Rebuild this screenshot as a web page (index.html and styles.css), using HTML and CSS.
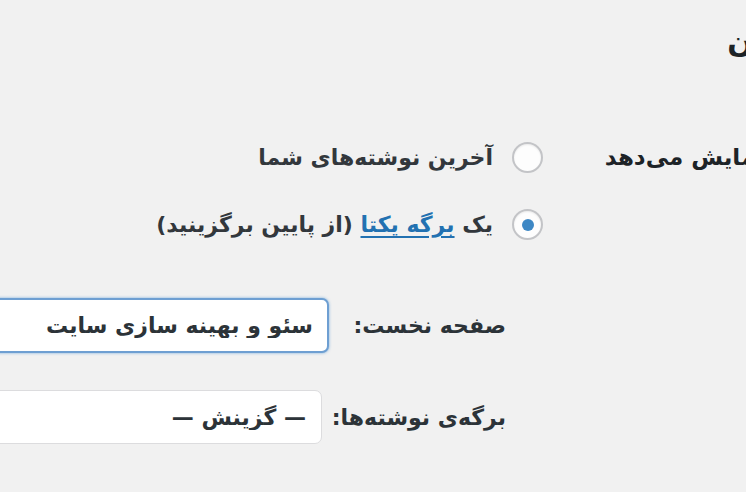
FILE: index.html
```html
<!DOCTYPE html>
<html lang="fa" dir="ltr">
<head>
<meta charset="utf-8">
<title>تنظیمات خواندن</title>
<link rel="stylesheet" href="styles.css">
</head>
<body>
<div class="wrap">
  <h1 class="title">تنظیمات خواندن</h1>
  <div class="form-row">
    <div class="th">صفحه نخست شما نمایش می‌دهد</div>
    <div class="td">
      <label class="radio-row"><span class="radio"></span><span>آخرین نوشته‌های شما</span></label>
      <label class="radio-row"><span class="radio checked"></span><span>یک <a href="#" class="link">برگه یکتا</a> (از پایین برگزینید)</span></label>
      <ul class="pages">
        <li class="field"><label class="lbl lbl-front">صفحه نخست:</label><input class="box box-focus" type="text" value="سئو و بهینه سازی سایت"></li>
        <li class="field field-second"><label class="lbl lbl-posts">برگه‌ی نوشته‌ها:</label><select class="box box-select"><option>— گزینش —</option></select></li>
      </ul>
    </div>
  </div>
</div>
</body>
</html>
```
FILE: styles.css
```css
html, body {
  margin: 0;
  padding: 0;
}
body {
  background: #f1f1f1;
  overflow: hidden;
  width: 746px;
  height: 492px;
  font-family: "DejaVu Sans", "Noto Sans", sans-serif;
  color: #2c3338;
}
.wrap {
  direction: rtl;
  width: 1100px;
  box-sizing: border-box;
  padding: 21px 134px 0 0;
}
.title {
  margin: 0 -3px 0 0;
  font-size: 30px;
  line-height: 42px;
  font-weight: bold;
  color: #1d2327;
}
.form-row {
  display: flex;
  margin-top: 61px;
}
.th {
  width: 435px;
  margin-right: -12px;
  flex: none;
  box-sizing: border-box;
  font-size: 23px;
  font-weight: bold;
  line-height: 67px;
  color: #1d2327;
  white-space: nowrap;
}
.td {
  flex: 1;
  font-size: 22px;
  font-weight: bold;
  color: #32373c;
}
.radio-row {
  display: flex;
  align-items: center;
  gap: 19px;
  height: 67px;
  white-space: nowrap;
}
.radio {
  width: 31px;
  height: 31px;
  box-sizing: border-box;
  border: 2px solid #c3c4c7;
  border-radius: 50%;
  background: #fdfdfd;
  box-shadow: inset 0 1px 2px rgba(0,0,0,0.08);
  display: flex;
  align-items: center;
  justify-content: center;
  flex: none;
}
.radio.checked::after {
  content: "";
  width: 12px;
  height: 12px;
  border-radius: 50%;
  background: #3d87c4;
}
.link {
  color: #2271b1;
  text-decoration: underline;
  text-underline-offset: 4px;
}
.pages {
  list-style: none;
  margin: 40px 37px 0 0;
  padding: 0;
}
.field {
  display: flex;
  align-items: center;
  gap: 14px;
}
.field-second {
  margin-top: 37px;
}
.lbl {
  flex: none;
  white-space: nowrap;
  color: #2c3338;
}
.lbl-front { width: 163px; }
.lbl-posts { width: 170px; }
.box {
  flex: none;
  width: 420px;
  box-sizing: border-box;
  font: bold 22px "DejaVu Sans", sans-serif;
  color: #2c3338;
  background: #fff;
  direction: rtl;
  -webkit-appearance: none;
  appearance: none;
  outline: none;
  margin: 0;
}
.box-focus {
  height: 55px;
  border: 2px solid #6e9fd2;
  border-radius: 7px;
  box-shadow: 0 0 3px rgba(91, 157, 217, 0.8);
  padding: 0 14px 0 0;
}
.box-select {
  height: 54px;
  border: 1px solid #dcdcde;
  border-radius: 7px;
  padding: 0 15px 0 0;
}
```
